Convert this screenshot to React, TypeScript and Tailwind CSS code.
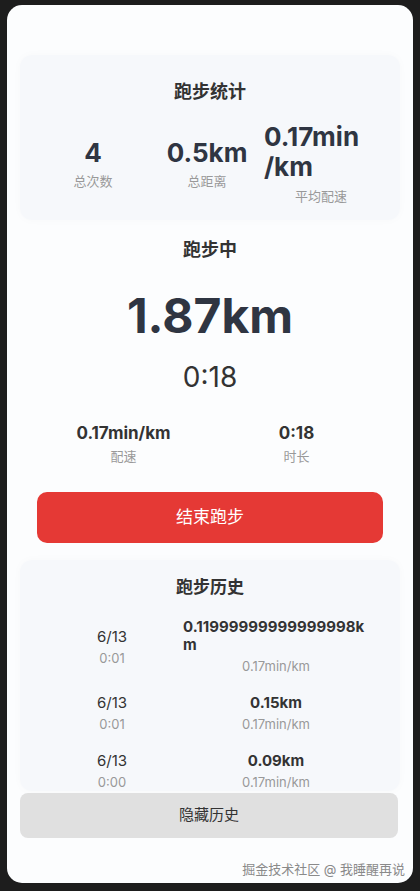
import React from "react";

const font = { fontFamily: '"Inter", "Noto Sans CJK SC", sans-serif' };

const history = [
  { date: "6/13", time: "0:01", dist: "0.11999999999999998km", pace: "0.17min/km" },
  { date: "6/13", time: "0:01", dist: "0.15km", pace: "0.17min/km" },
  { date: "6/13", time: "0:00", dist: "0.09km", pace: "0.17min/km" },
];

export default function App() {
  return (
    <div
      className="w-[420px] h-[891px] bg-[#1d1d1d] pt-[5px] pb-[8px] px-[7px] overflow-hidden"
      style={font}
    >
      <div className="relative h-[878px] w-[406px] rounded-[15px] bg-[#fcfdfe] px-[13px] pt-[50px] overflow-hidden">
        {/* Stats panel */}
        <div className="rounded-xl bg-[#f6f8fb] shadow-[0_0_10px_rgba(0,0,0,0.025)] pt-[23px] pb-[14px] pl-[16px] pr-[22px]">
          <div className="text-center text-[18px] leading-[27px] font-bold text-[#333] pl-[6px]">跑步统计</div>
          <div className="mt-[17px] flex items-center">
            <div className="flex-1 flex flex-col items-center">
              <div className="text-[26px] leading-[30px] font-bold text-[#2f3542]">4</div>
              <div className="mt-[3px] text-[13px] leading-[20px] text-[#999]">总次数</div>
            </div>
            <div className="flex-1 flex flex-col items-center">
              <div className="text-[26px] leading-[30px] font-bold text-[#2f3542]">0.5km</div>
              <div className="mt-[3px] text-[13px] leading-[20px] text-[#999]">总距离</div>
            </div>
            <div className="flex-1 flex flex-col items-center">
              <div className="text-[26px] leading-[30px] font-bold text-[#2f3542]">
                0.17min<wbr />/km
              </div>
              <div className="mt-[4px] text-[13px] leading-[20px] text-[#999]">平均配速</div>
            </div>
          </div>
        </div>

        {/* Running section */}
        <div className="px-[17px]">
          <div className="mt-[17px] text-center text-[18px] leading-[26px] font-bold text-[#333]">跑步中</div>
          <div className="mt-[28px] text-center text-[48px] leading-[50px] font-bold text-[#2f3542]">1.87km</div>
          <div className="mt-[19px] text-center text-[28px] leading-[34px] text-[#333]">0:18</div>
          <div className="mt-[27px] flex">
            <div className="flex-1 flex flex-col items-center">
              <div className="text-[17px] leading-[24px] font-bold text-[#333]">0.17min/km</div>
              <div className="mt-[1px] text-[13px] leading-[20px] text-[#999]">配速</div>
            </div>
            <div className="flex-1 flex flex-col items-center">
              <div className="text-[17px] leading-[24px] font-bold text-[#333]">0:18</div>
              <div className="mt-[1px] text-[13px] leading-[20px] text-[#999]">时长</div>
            </div>
          </div>
          <button className="mt-[26px] w-full h-[51px] rounded-[10px] bg-[#e53935] text-white text-[17px]">
            结束跑步
          </button>
        </div>

        {/* History panel */}
        <div className="mt-[17px] h-[231px] overflow-hidden rounded-xl bg-[#f6f8fb] shadow-[0_0_10px_rgba(0,0,0,0.025)] pt-[14px]">
          <div className="text-center text-[17px] leading-[26px] font-bold text-[#333]">跑步历史</div>
          <div className="mt-[18px] flex flex-col gap-[17px] px-[21px]">
            {history.map((h, i) => (
              <div key={i} className="flex items-center">
                <div className="w-[142px] flex flex-col items-center">
                  <div className="text-[15px] leading-[20px] text-[#333]">{h.date}</div>
                  <div className="mt-[1px] text-[13px] leading-[20px] text-[#999]">{h.time}</div>
                </div>
                <div className="w-[186px] flex flex-col items-center">
                  <div className="text-[15px] leading-[18px] font-bold text-[#333] break-all">{h.dist}</div>
                  <div className="mt-[2px] text-[13px] leading-[20px] text-[#999]">{h.pace}</div>
                </div>
              </div>
            ))}
          </div>
        </div>

        <button className="mt-[2px] w-[378px] h-[45px] rounded-lg bg-[#e0e0e0] text-[15px] text-[#333]">
          隐藏历史
        </button>

        <div className="absolute right-[8px] bottom-[4px] text-[13px] leading-[20px] text-[#8a8a8a]">
          掘金技术社区 @ 我睡醒再说
        </div>
      </div>
    </div>
  );
}
